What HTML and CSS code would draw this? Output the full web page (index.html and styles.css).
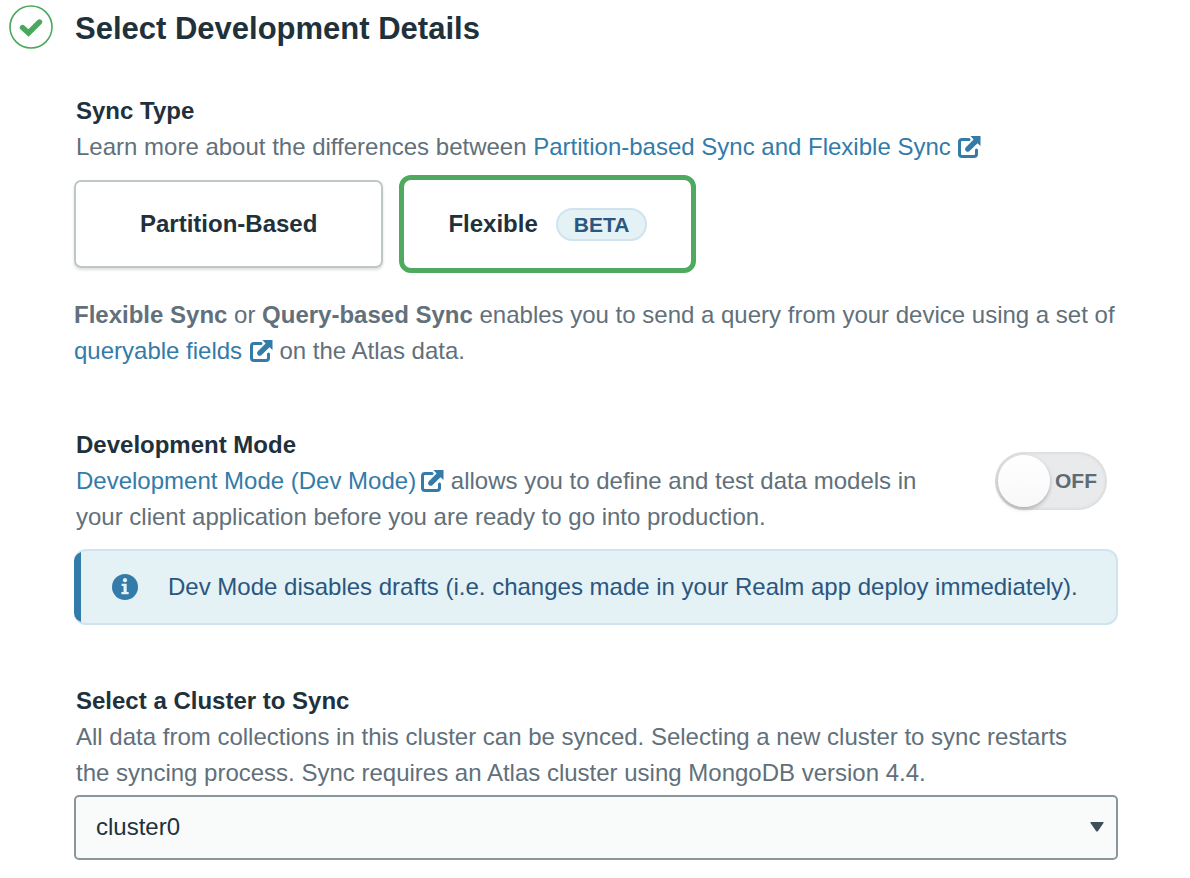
FILE: index.html
```html
<!DOCTYPE html>
<html lang="en">
<head>
<meta charset="utf-8">
<meta name="viewport" content="width=device-width, initial-scale=1">
<title>Select Development Details</title>
<link rel="stylesheet" href="styles.css">
</head>
<body>
<svg class="sprite" aria-hidden="true">
  <symbol id="external" viewBox="0 0 24 24">
    <path d="M12 4.500H5Q2.500 4.500 2.500 7V19Q2.500 21.500 5 21.500H17Q19.500 21.500 19.500 19V15" fill="none" stroke="currentColor" stroke-width="3" stroke-linecap="round"/>
    <path d="M13.500 1H23.500V11L20.500 8.300L12.300 16.200Q10.500 17.600 8.800 16Q7.200 14.200 8.600 12.500L16.600 4.400Z" fill="currentColor"/>
  </symbol>
</svg>
<main class="step">
  <header class="step-header">
    <svg class="step-check" viewBox="0 0 44 44" aria-hidden="true">
      <circle cx="22" cy="22" r="21" fill="none" stroke="currentColor" stroke-width="1.600"/>
      <path d="M13.500 22.500L19.500 28L30.500 17" fill="none" stroke="currentColor" stroke-width="5.400" stroke-linecap="round"/>
    </svg>
    <h1 class="step-title">Select Development Details</h1>
  </header>

  <div class="step-body">
    <section class="section">
      <h2 class="section-title">Sync Type</h2>
      <p class="text text-inset">Learn more about the differences between <a class="link" href="#sync">Partition-based Sync and Flexible Sync <svg class="external"><use href="#external"/></svg></a></p>
      <div class="options" role="radiogroup" aria-label="Sync Type">
        <label class="option"><input class="option-input" type="radio" name="sync">Partition-Based</label>
        <label class="option"><input class="option-input" type="radio" name="sync" checked>Flexible <span class="badge">BETA</span></label>
      </div>
      <p class="text"><strong>Flexible Sync</strong> or <strong>Query-based Sync</strong> enables you to send a query from your device using a set of <a class="link" href="#fields">queryable fields <svg class="external"><use href="#external"/></svg></a> on the Atlas data.</p>
    </section>

    <section class="section">
      <div class="mode">
        <div class="mode-copy">
          <h2 class="section-title">Development Mode</h2>
          <p class="text text-inset"><a class="link" href="#devmode">Development Mode (Dev Mode)<svg class="external external-tight"><use href="#external"/></svg></a> allows you to define and test data models in your client application before you are ready to go into production.</p>
        </div>
        <label class="toggle"><input class="toggle-input" type="checkbox" role="switch" aria-label="Development Mode"><span class="toggle-text">OFF</span></label>
      </div>
      <div class="banner">
        <svg class="info" viewBox="0 0 26 26" aria-hidden="true">
          <circle cx="13" cy="13" r="13" fill="currentColor"/>
          <circle class="info-mark" cx="13" cy="6.200" r="2.100"/>
          <path class="info-mark" d="M9.600 9.800H14.700V18H16.700V20.300H9.400V18H11.500V12.100H9.600Z"/>
        </svg>
        <p class="banner-text">Dev Mode disables drafts (i.e. changes made in your Realm app deploy immediately).</p>
      </div>
    </section>

    <section class="section">
      <h2 class="section-title"><label for="cluster">Select a Cluster to Sync</label></h2>
      <p class="text text-inset text-narrow">All data from collections in this cluster can be synced. Selecting a new cluster to sync restarts the syncing process. Sync requires an Atlas cluster using MongoDB version 4.4.</p>
      <div class="select">
        <select class="select-input" id="cluster"><option>cluster0</option></select>
        <svg class="caret" viewBox="0 0 14 10" aria-hidden="true"><path d="M1 0H13Q14 0 13.500 1L8 9Q7 10 6 9L.5 1Q0 0 1 0Z" fill="currentColor"/></svg>
      </div>
    </section>
  </div>
</main>
</body>
</html>
```
FILE: styles.css
```css
* { box-sizing: border-box; }

body {
  margin: 0;
  background: #fff;
  color: #21313c;
  font: 24px/36px "Liberation Sans", Arial, sans-serif;
}

h1, h2, p { margin: 0; }

.sprite { display: none; }

.step { padding: 5px 72px 18px 9px; }

.step-header {
  display: flex;
  align-items: flex-start;
  gap: 22px;
}

.step-check {
  width: 44px;
  height: 44px;
  flex: none;
  color: #4aa85c;
}

.step-title { font-size: 31px; line-height: 48px; }

.step-body {
  display: flex;
  flex-direction: column;
  gap: 58px;
  padding: 40px 0 0 65px;
}

.section-title {
  font-size: 24px;
  line-height: 36px;
  padding-left: 2px;
}

.text { color: #61707a; }

.text-inset { padding-left: 2px; }

.text-narrow { max-width: 1020px; }

.link { color: #337ba9; text-decoration: none; }

.external {
  width: 24px;
  height: 24px;
  vertical-align: -4px;
}

.external-tight { margin-left: 4px; }

.options {
  display: flex;
  align-items: center;
  gap: 16px;
  margin: 10px 0 24px;
}

.option {
  display: flex;
  align-items: center;
  justify-content: center;
  gap: 18px;
  height: 88px;
  padding: 0 64px;
  border: 2px solid #bdc7c5;
  border-radius: 7px;
  box-shadow: 0 2px 3px #0002;
  font-weight: bold;
  cursor: pointer;
}

.option:has(:checked) {
  height: 98px;
  padding: 0 44px;
  border: 5px solid #4fa95e;
  border-radius: 12px;
  box-shadow: none;
}

.option-input {
  appearance: none;
  position: absolute;
  margin: 0;
}

.badge {
  padding: 0 16px;
  border: 2px solid #cfe4ef;
  border-radius: 17px;
  background: #e4f1f5;
  color: #2a567f;
  font-size: 21px;
  line-height: 29px;
}

.mode {
  display: flex;
  align-items: center;
  justify-content: space-between;
}

.mode-copy { max-width: 870px; }

.toggle {
  position: relative;
  display: flex;
  margin-right: 11px;
  cursor: pointer;
}

.toggle-input {
  appearance: none;
  width: 112px;
  height: 58px;
  margin: 0;
  padding: 3px;
  border-radius: 29px;
  background: #e9eaec;
  box-shadow: inset 0 0 4px #0002;
}

.toggle-input::before {
  content: "";
  display: block;
  width: 52px;
  height: 52px;
  border-radius: 50%;
  background: linear-gradient(#fff, #f8f8f8);
  box-shadow: 0 2px 4px #0004;
}

.toggle-text {
  position: absolute;
  right: 10px;
  top: 11px;
  color: #5d6c74;
  font-size: 21px;
  font-weight: bold;
}

.banner {
  display: flex;
  align-items: center;
  gap: 30px;
  margin-top: 14px;
  padding: 18px 28px 18px 38px;
  border: 2px solid #cfe4ef;
  border-left: 0;
  border-radius: 12px;
  background: linear-gradient(90deg, #337ba9 7px, #e4f1f5 7px) border-box;
  color: #2a567f;
}

.info {
  flex: none;
  width: 26px;
  height: 26px;
  color: #337ba9;
}

.info-mark { fill: #e4f1f5; }

.select {
  position: relative;
  margin-top: 4px;
}

.select-input {
  appearance: none;
  display: block;
  width: 100%;
  height: 65px;
  padding: 0 20px 2px;
  border: 2px solid #89979b;
  border-radius: 5px;
  background: #f9fbfa;
  color: #21313c;
  font: inherit;
}

.caret {
  position: absolute;
  right: 14px;
  top: 27px;
  width: 14px;
  height: 10px;
  color: #3d4f58;
  pointer-events: none;
}
```
